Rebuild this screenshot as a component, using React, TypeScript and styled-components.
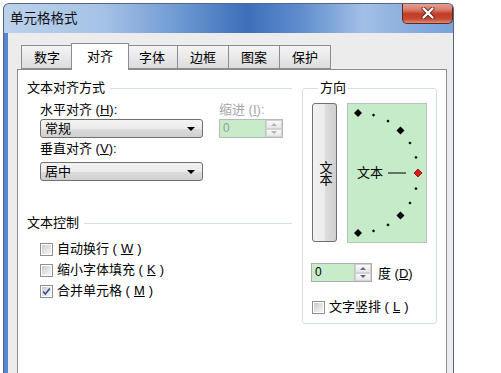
import React from "react";
import styled, { createGlobalStyle } from "styled-components";

const GlobalStyle = createGlobalStyle`
  html, body {
    margin: 0;
    padding: 0;
    height: 373px;
    overflow: hidden;
    background: #ffffff;
    font-family: "Liberation Sans", "Noto Sans CJK SC", sans-serif;
    font-size: 13px;
    color: #000;
  }
  * { box-sizing: border-box; }
`;

const Window = styled.div`
  margin: 3px 0 0 3px;
  width: 451px;
  height: 372px;
  display: flex;
  flex-direction: column;
  border: 1px solid #56657c;
  border-bottom: none;
  border-radius: 6px 6px 0 0;
  background: linear-gradient(
    90deg,
    #bcd2ec 0%,
    #a6c2e6 22%,
    #6a97d2 40%,
    #3d6fb9 54%,
    #5f8dcd 66%,
    #a2c0e6 80%,
    #86abdc 92%,
    #7aa3d9 100%
  );
  overflow: hidden;
`;

const TitleBar = styled.div`
  height: 29px;
  display: flex;
  justify-content: space-between;
  align-items: flex-start;
  padding-left: 6px;
`;

const TitleText = styled.span`
  font-size: 13.5px;
  line-height: 16px;
  margin-top: 7px;
  color: #101010;
`;

const CloseButton = styled.div`
  width: 51px;
  height: 21px;
  margin-top: -1px;
  border: 1px solid #5c2b24;
  border-top: none;
  border-radius: 0 0 5px 5px;
  background: linear-gradient(180deg, #e7a698 0%, #d77a66 35%, #c23a25 55%, #c74a33 80%, #e08a74 100%);
  display: flex;
  align-items: center;
  justify-content: center;
`;

const Client = styled.div`
  flex: 1;
  display: flex;
  flex-direction: column;
  border-left: 4px solid #5787cc;
  background: #ececec;
  padding: 10px 6px 0 9px;
`;

const TabRow = styled.div`
  display: flex;
  align-items: flex-end;
  height: 26px;
  padding-left: 4px;
  position: relative;
  z-index: 1;
`;

const Tab = styled.div<{ $active?: boolean }>`
  height: ${({ $active }) => ($active ? "27px" : "24px")};
  padding: ${({ $active }) => ($active ? "0 15px" : "0 12px")};
  margin: ${({ $active }) => ($active ? "0 -2px -1px" : "0")};
  border: 1px solid #898c95;
  border-bottom: ${({ $active }) => ($active ? "none" : "1px solid #898c95")};
  border-left: ${({ $active }) => ($active ? "1px solid #898c95" : "none")};
  z-index: ${({ $active }) => ($active ? 2 : 1)};
  background: ${({ $active }) => ($active ? "#ffffff" : "linear-gradient(180deg, #f4f4f4 0%, #e9e9e9 50%, #dcdcdc 100%)")};
  display: flex;
  align-items: center;
  justify-content: center;
  line-height: 16px;
  padding-top: ${({ $active }) => ($active ? "0" : "2px")};
  &:first-child {
    border-left: 1px solid #898c95;
  }
`;

const Panel = styled.div`
  flex: 1;
  background: #ffffff;
  border: 1px solid #898c95;
  border-bottom: none;
  padding: 10px 0 0 9px;
  display: flex;
  gap: 10px;
  align-items: flex-start;
`;

const LeftCol = styled.div`
  width: 265px;
  display: flex;
  flex-direction: column;
`;

const SectionHead = styled.div<{ $top?: number }>`
  display: flex;
  align-items: center;
  gap: 5px;
  height: 16px;
  line-height: 16px;
  margin-top: ${({ $top }) => $top ?? 0}px;
  &::after {
    content: "";
    flex: 1;
    height: 1px;
    background: #d5dfe5;
    box-shadow: 0 1px 0 #ffffff;
  }
`;

const Indent = styled.div`
  padding-left: 13px;
`;

const AlignGrid = styled.div`
  display: grid;
  grid-template-columns: 163px 64px;
  column-gap: 16px;
  margin-top: 6px;
`;

const FieldLabel = styled.div<{ $disabled?: boolean; $top?: number }>`
  height: 16px;
  line-height: 16px;
  white-space: nowrap;
  margin-top: ${({ $top }) => $top ?? 0}px;
  color: ${({ $disabled }) => ($disabled ? "#a6a6a6" : "#000")};
`;

const Select = styled.div<{ $top?: number }>`
  height: 19px;
  margin-top: ${({ $top }) => $top ?? 0}px;
  border: 1px solid #707070;
  border-radius: 3px;
  background: linear-gradient(180deg, #f3f3f3 0%, #ebebeb 50%, #dddddd 51%, #cfcfcf 100%);
  display: flex;
  align-items: center;
  justify-content: space-between;
  padding: 0 7px 0 4px;
  line-height: 16px;
`;

const Arrow = styled.span`
  width: 0;
  height: 0;
  border-left: 4px solid transparent;
  border-right: 4px solid transparent;
  border-top: 4px solid #000;
  margin-top: 1px;
`;

const SpinBox = styled.div<{ $disabled?: boolean; $width: number; $top?: number }>`
  width: ${({ $width }) => $width}px;
  height: 19px;
  margin-top: ${({ $top }) => $top ?? 0}px;
  display: flex;
  border: 1px solid ${({ $disabled }) => ($disabled ? "#b7babd" : "#abadb3")};
  background: #c8ecca;
`;

const SpinValue = styled.div<{ $disabled?: boolean }>`
  flex: 1;
  padding-left: 3px;
  line-height: 17px;
  font-size: 12px;
  color: ${({ $disabled }) => ($disabled ? "#9a9a9a" : "#000")};
`;

const SpinButtons = styled.div`
  width: 17px;
  display: flex;
  flex-direction: column;
  border-left: 1px solid #c4c4c4;
  background: #f4f4f4;
`;

const SpinHalf = styled.div<{ $up?: boolean; $disabled?: boolean }>`
  flex: 1;
  display: flex;
  align-items: center;
  justify-content: center;
  border: 1px solid #d2d2d2;
  background: linear-gradient(180deg, #fafafa, #e6e6e6);
  &::before {
    content: "";
    width: 0;
    height: 0;
    border-left: 3px solid transparent;
    border-right: 3px solid transparent;
    ${({ $up, $disabled }) =>
      $up
        ? `border-bottom: 3px solid ${$disabled ? "#b4b4b4" : "#5a6a8a"};`
        : `border-top: 3px solid ${$disabled ? "#b4b4b4" : "#5a6a8a"};`}
  }
`;

const CheckRow = styled.div<{ $top: number }>`
  display: flex;
  align-items: center;
  gap: 4px;
  height: 16px;
  line-height: 16px;
  margin-top: ${({ $top }) => $top}px;
`;

const Box = styled.span`
  width: 13px;
  height: 13px;
  border: 1px solid #8f8f8f;
  background: #ffffff;
  padding: 1px;
  display: flex;
`;

const BoxInner = styled.span`
  flex: 1;
  background: linear-gradient(135deg, #cbcbcb 0%, #e6e6e6 60%, #f6f6f6 100%);
  display: flex;
  align-items: center;
  justify-content: center;
`;

const Group = styled.fieldset`
  margin: 0;
  width: 135px;
  min-width: 0;
  border: 1px solid #d5dfe5;
  border-radius: 3px;
  padding: 7px 9px 8px 9px;
`;

const Legend = styled.legend`
  padding: 0 2px;
  margin-left: 6px;
  line-height: 16px;
  height: 16px;
`;

const OrientRow = styled.div`
  display: flex;
  gap: 10px;
`;

const VerticalButton = styled.div`
  width: 25px;
  height: 139px;
  border: 1px solid #707070;
  border-radius: 3px;
  background: linear-gradient(90deg, #f2f2f2 0%, #ebebeb 50%, #dddddd 51%, #cfcfcf 100%);
  display: flex;
  align-items: center;
  justify-content: center;
  writing-mode: vertical-rl;
  text-orientation: upright;
  line-height: 16px;
  letter-spacing: -1px;
`;

const Dial = styled.div`
  position: relative;
  width: 81px;
  height: 140px;
  border: 1px solid #b9c2b9;
  background: #c6ebc8;
`;

const DialSvg = styled.svg`
  position: absolute;
  left: 0;
  top: 0;
`;

const DialLabel = styled.span`
  position: absolute;
  left: 9px;
  top: 61px;
  line-height: 16px;
`;

const DegreeRow = styled.div`
  display: flex;
  align-items: center;
  gap: 6px;
  margin-top: 20px;
  margin-left: -1px;
`;

const angles = [90, 75, 60, 45, 30, 15, -15, -30, -45, -60, -75, -90];

const Diamond = ({ x, y, r, fill, stroke }: { x: number; y: number; r: number; fill: string; stroke?: string }) => (
  <polygon
    points={`${x},${y - r} ${x + r},${y} ${x},${y + r} ${x - r},${y}`}
    fill={fill}
    stroke={stroke}
    strokeWidth={stroke ? 0.8 : 0}
  />
);

const Checkbox = ({ checked }: { checked?: boolean }) => (
  <Box>
    <BoxInner>
      {checked && (
        <svg width="9" height="9" viewBox="0 0 9 9">
          <path d="M1.2 4.6 L3.4 7 L7.8 1.6" fill="none" stroke="#3c4f8c" strokeWidth="1.6" />
        </svg>
      )}
    </BoxInner>
  </Box>
);

const Spin = ({ value, width, disabled, top }: { value: string; width: number; disabled?: boolean; top?: number }) => (
  <SpinBox $width={width} $disabled={disabled} $top={top}>
    <SpinValue $disabled={disabled}>{value}</SpinValue>
    <SpinButtons>
      <SpinHalf $up $disabled={disabled} />
      <SpinHalf $disabled={disabled} />
    </SpinButtons>
  </SpinBox>
);

const tabs = ["数字", "对齐", "字体", "边框", "图案", "保护"];

export default function App() {
  const cx = 10;
  const cy = 69;
  const rad = 60;
  return (
    <>
      <GlobalStyle />
      <Window>
        <TitleBar>
          <TitleText>单元格格式</TitleText>
          <CloseButton>
            <svg width="14" height="12" viewBox="0 0 14 12">
              <path d="M2.5 1.5 L11.5 10.5 M11.5 1.5 L2.5 10.5" stroke="#5a2620" strokeWidth="4" strokeLinecap="round" />
              <path d="M2.5 1.5 L11.5 10.5 M11.5 1.5 L2.5 10.5" stroke="#ffffff" strokeWidth="2.4" strokeLinecap="round" />
            </svg>
          </CloseButton>
        </TitleBar>
        <Client>
          <TabRow>
            {tabs.map((t) => (
              <Tab key={t} $active={t === "对齐"}>
                {t}
              </Tab>
            ))}
          </TabRow>
          <Panel>
            <LeftCol>
              <SectionHead>文本对齐方式</SectionHead>
              <Indent>
                <AlignGrid>
                  <FieldLabel>
                    水平对齐 (<u>H</u>):
                  </FieldLabel>
                  <FieldLabel $disabled>
                    缩进 (<u>I</u>):
                  </FieldLabel>
                  <Select $top={1}>
                    常规
                    <Arrow />
                  </Select>
                  <Spin value="0" width={64} disabled top={1} />
                  <FieldLabel $top={3}>
                    垂直对齐 (<u>V</u>):
                  </FieldLabel>
                  <div />
                  <Select $top={5}>
                    居中
                    <Arrow />
                  </Select>
                </AlignGrid>
              </Indent>
              <SectionHead $top={34}>文本控制</SectionHead>
              <Indent>
                <CheckRow $top={10}>
                  <Checkbox />
                  自动换行 (<u>W</u>)
                </CheckRow>
                <CheckRow $top={5}>
                  <Checkbox />
                  缩小字体填充 (<u>K</u>)
                </CheckRow>
                <CheckRow $top={5}>
                  <Checkbox checked />
                  合并单元格 (<u>M</u>)
                </CheckRow>
              </Indent>
            </LeftCol>
            <Group>
              <Legend>方向</Legend>
              <OrientRow>
                <VerticalButton>文本</VerticalButton>
                <Dial>
                  <DialSvg width="79" height="138" viewBox="0 0 79 138">
                    <line x1="40" y1={cy} x2="58" y2={cy} stroke="#000" strokeWidth="1.2" />
                    {angles.map((a) => {
                      const rr = (a * Math.PI) / 180;
                      const x = cx + rad * Math.cos(rr);
                      const y = cy - rad * Math.sin(rr);
                      const big = Math.abs(a) === 90 || Math.abs(a) === 45;
                      return <Diamond key={a} x={x} y={y} r={big ? 4 : 1.6} fill="#000" />;
                    })}
                    <Diamond x={cx + rad} y={cy} r={4} fill="#e8141c" stroke="#7a0a0a" />
                  </DialSvg>
                  <DialLabel>文本</DialLabel>
                </Dial>
              </OrientRow>
              <DegreeRow>
                <Spin value="0" width={61} />
                <span>
                  度 (<u>D</u>)
                </span>
              </DegreeRow>
              <CheckRow $top={17}>
                <Checkbox />
                文字竖排 (<u>L</u>)
              </CheckRow>
            </Group>
          </Panel>
        </Client>
      </Window>
    </>
  );
}
